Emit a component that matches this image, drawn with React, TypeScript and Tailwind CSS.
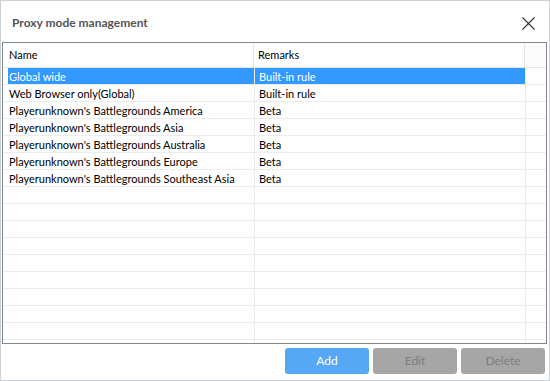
import React from 'react';

const rows: [string, string][] = [
  ['Global wide', 'Built-in rule'],
  ['Web Browser only(Global)', 'Built-in rule'],
  ["Playerunknown's Battlegrounds America", 'Beta'],
  ["Playerunknown's Battlegrounds Asia", 'Beta'],
  ["Playerunknown's Battlegrounds Australia", 'Beta'],
  ["Playerunknown's Battlegrounds Europe", 'Beta'],
  ["Playerunknown's Battlegrounds Southeast Asia", 'Beta'],
];

const App: React.FC = () => {
  const filled: [string, string][] = [...rows, ...Array(10).fill(['', ''])];

  return (
    <div className="w-[550px] h-[381px] bg-white border border-[#ccd3d8] flex flex-col text-[11px] text-black whitespace-nowrap" style={{ fontFamily: 'Lato, "Liberation Sans", sans-serif' }}>
      <div className="h-[41px] flex items-center justify-between pl-[11px] pr-[14px] pt-[3px] shrink-0">
        <span className="font-bold text-[#555] text-[12px]">Proxy mode management</span>
        <svg width="13" height="13" viewBox="0 0 13 13" className="text-[#333]">
          <path d="M0.5 0.5L12.5 12.5M12.5 0.5L0.5 12.5" stroke="currentColor" strokeWidth="1.1" />
        </svg>
      </div>

      <div className="ml-[1px] mr-[2px] h-[302px] border border-[#828790] flex flex-col overflow-hidden shrink-0">
        <div className="h-[25px] flex border-b border-[#e5e5e5] shrink-0">
          <div className="w-[251px] border-r border-[#e5e5e5] flex items-center pl-[6px]">Name</div>
          <div className="w-[271px] border-r border-[#e5e5e5] flex items-center pl-[4px]">Remarks</div>
          <div className="flex-1 bg-[#fbfbfb]" />
        </div>
        <div className="flex-1 overflow-hidden">
          {filled.map(([name, remark], i) => (
            <div key={i} className="h-[17px] flex border-b border-[#ececec]">
              <div className="w-[251px] flex">
                <div className="w-[5px] shrink-0" />
                <div className={`flex-1 flex items-center pl-[1px] leading-none ${i === 0 ? 'bg-[#3399ff] text-white' : ''}`}>{name}</div>
              </div>
              <div className={`w-[271px] border-l border-[#ececec] flex items-center pl-[4px] leading-none ${i === 0 ? 'bg-[#3399ff] text-white border-[#3399ff]' : ''}`}>{remark}</div>
              <div className="flex-1 border-l border-[#ececec]" />
            </div>
          ))}
        </div>
      </div>

      <div className="flex justify-end gap-[4px] pr-[4px] pt-[4px]">
        <button className="w-[84px] h-[26px] rounded-[3px] bg-[#56a8f5] text-white text-[12px]">Add</button>
        <button className="w-[84px] h-[26px] rounded-[3px] bg-[#a6a6a6] text-[#7d7d7d] text-[12px]">Edit</button>
        <button className="w-[84px] h-[26px] rounded-[3px] bg-[#a6a6a6] text-[#7d7d7d] text-[12px]">Delete</button>
      </div>
    </div>
  );
};

export default App;
